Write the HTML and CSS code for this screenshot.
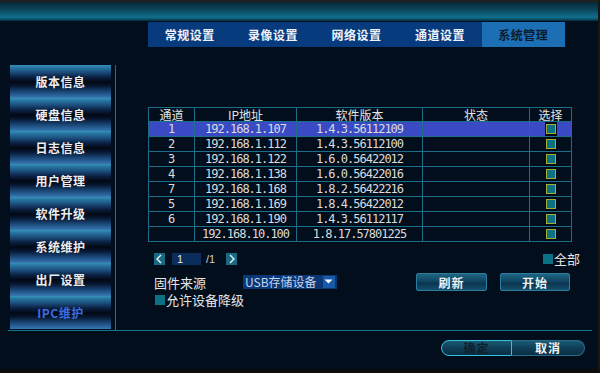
FILE: index.html
```html
<!DOCTYPE html>
<html lang="zh-CN">
<head>
    <meta charset="UTF-8">
    <title>系统管理 - IPC维护</title>
    <link rel="stylesheet" href="styles.css">
</head>
<body>
    <div class="screen">
        <div class="topbar"></div>

        <!-- 主菜单 -->
        <div class="tabs">
            <div class="tab">常规设置</div>
            <div class="tab">录像设置</div>
            <div class="tab">网络设置</div>
            <div class="tab">通道设置</div>
            <div class="tab active">系统管理</div>
        </div>

        <div class="main">
            <!-- 左侧菜单 -->
            <div class="side">
                <div class="side-btn">版本信息</div>
                <div class="side-btn">硬盘信息</div>
                <div class="side-btn">日志信息</div>
                <div class="side-btn">用户管理</div>
                <div class="side-btn">软件升级</div>
                <div class="side-btn">系统维护</div>
                <div class="side-btn">出厂设置</div>
                <div class="side-btn current">IPC维护</div>
            </div>

            <div class="content">
                <table class="ipc-table">
                    <colgroup>
                        <col class="c-ch">
                        <col class="c-ip">
                        <col class="c-ver">
                        <col class="c-st">
                        <col class="c-sel">
                    </colgroup>
                    <thead>
                        <tr>
                            <th>通道</th>
                            <th>IP地址</th>
                            <th>软件版本</th>
                            <th>状态</th>
                            <th>选择</th>
                        </tr>
                    </thead>
                    <tbody>
                        <tr class="selected">
                            <td>1</td><td class="num">192.168.1.107</td><td class="num">1.4.3.56112109</td><td></td>
                            <td class="sel"><span class="chk-wrap"><span class="chk"></span></span></td>
                        </tr>
                        <tr>
                            <td>2</td><td class="num">192.168.1.112</td><td class="num">1.4.3.56112100</td><td></td>
                            <td class="sel"><span class="chk-wrap"><span class="chk"></span></span></td>
                        </tr>
                        <tr>
                            <td>3</td><td class="num">192.168.1.122</td><td class="num">1.6.0.56422012</td><td></td>
                            <td class="sel"><span class="chk-wrap"><span class="chk"></span></span></td>
                        </tr>
                        <tr>
                            <td>4</td><td class="num">192.168.1.138</td><td class="num">1.6.0.56422016</td><td></td>
                            <td class="sel"><span class="chk-wrap"><span class="chk"></span></span></td>
                        </tr>
                        <tr>
                            <td>7</td><td class="num">192.168.1.168</td><td class="num">1.8.2.56422216</td><td></td>
                            <td class="sel"><span class="chk-wrap"><span class="chk"></span></span></td>
                        </tr>
                        <tr>
                            <td>5</td><td class="num">192.168.1.169</td><td class="num">1.8.4.56422012</td><td></td>
                            <td class="sel"><span class="chk-wrap"><span class="chk"></span></span></td>
                        </tr>
                        <tr>
                            <td>6</td><td class="num">192.168.1.190</td><td class="num">1.4.3.56112117</td><td></td>
                            <td class="sel"><span class="chk-wrap"><span class="chk"></span></span></td>
                        </tr>
                        <tr>
                            <td></td><td class="num">192.168.10.100</td><td class="num">1.8.17.57801225</td><td></td>
                            <td class="sel"><span class="chk-wrap"><span class="chk"></span></span></td>
                        </tr>
                    </tbody>
                </table>

                <div class="row-pager">
                    <div class="pager">
                        <span class="pg-btn">
                            <svg width="11" height="12" viewBox="0 0 11 12"><polyline points="7,2 3,6 7,10" fill="none" stroke="#e8f4f8" stroke-width="1.4"/></svg>
                        </span>
                        <span class="pg-input">1</span>
                        <span class="pg-total">/1</span>
                        <span class="pg-btn">
                            <svg width="11" height="12" viewBox="0 0 11 12"><polyline points="4,2 8,6 4,10" fill="none" stroke="#e8f4f8" stroke-width="1.4"/></svg>
                        </span>
                    </div>
                    <div class="check-line"><span class="box"></span>全部</div>
                </div>

                <div class="row-source">
                    <span class="label">固件来源</span>
                    <div class="select">
                        <span class="select-text">USB存储设备</span>
                        <span class="select-arrow">
                            <svg width="11" height="11" viewBox="0 0 11 11"><polygon points="1.5,3.5 9.5,3.5 5.5,7.5" fill="#ffffff"/></svg>
                        </span>
                    </div>
                    <button class="btn btn-refresh">刷新</button>
                    <button class="btn btn-start">开始</button>
                </div>

                <div class="row-allow">
                    <div class="check-line"><span class="box"></span>允许设备降级</div>
                </div>
            </div>
        </div>

        <!-- 底部按钮 -->
        <div class="footer">
            <div class="pill">
                <button class="pill-btn ok">确定</button>
                <button class="pill-btn cancel">取消</button>
            </div>
        </div>
    </div>
</body>
</html>
```

FILE: styles.css
```css
* {
    margin: 0;
    padding: 0;
    box-sizing: border-box;
}

body {
    background: #010c19;
    font-family: "Noto Sans CJK SC", "Liberation Sans", sans-serif;
    color: #e2e2e2;
}

.screen {
    width: 600px;
    height: 373px;
    background: #020e1c;
    border-right: 2px solid #161616;
    border-bottom: 4px solid #0c0c0c;
    overflow: hidden;
}

.topbar {
    height: 21px;
    border-top: 2px solid #202020;
    background: linear-gradient(to bottom, #082636 0%, #0b4a62 45%, #10708c 80%, #0a4a62 92%, #04283a 100%);
}

/* 主菜单 */
.tabs {
    display: flex;
    width: 417px;
    height: 25px;
    margin: 1px 0 0 148px;
    background: #073b7e;
}

.tab {
    flex: 1;
    display: flex;
    align-items: center;
    justify-content: center;
    font-size: 12px;
    font-weight: 700;
    letter-spacing: 0.5px;
    color: #eef2f8;
}

.tab.active {
    background: #1c6fb4;
    color: #0c1a2c;
}

.main {
    display: flex;
    width: 584px;
    height: 266px;
    margin: 18px 0 0 8px;
    border-bottom: 1px solid #16758d;
}

/* 左侧菜单 */
.side {
    width: 108px;
    padding-left: 2px;
    border-right: 1px solid #16758d;
}

.side-btn {
    width: 101px;
    height: 33px;
    display: flex;
    align-items: center;
    justify-content: center;
    font-size: 12px;
    font-weight: 700;
    letter-spacing: 0.5px;
    color: #eeeeee;
    background: linear-gradient(to bottom,
        #3594bb 0px, #2a7aa6 2px, #1c4f7d 7px, #0b2144 12px,
        #020814 17px, #071731 21px, #17406e 26px, #2c68a0 31px, #3a7cb2 33px);
}

.side-btn.current {
    color: #3b6ee0;
}

.content {
    flex: 1;
    padding: 42px 0 0 32px;
}

/* 通道列表 */
.ipc-table {
    width: 423px;
    border-collapse: collapse;
    table-layout: fixed;
}

.c-ch { width: 46px; }
.c-ip { width: 102px; }
.c-ver { width: 126px; }
.c-st { width: 107px; }
.c-sel { width: 42px; }

.ipc-table th,
.ipc-table td {
    border: 1px solid #1c6e88;
    text-align: center;
    padding: 0;
    white-space: nowrap;
}

.ipc-table th {
    height: 14px;
    font-size: 12px;
    font-weight: 400;
    line-height: 13px;
    color: #e4e4e4;
}

.ipc-table td {
    height: 15px;
    font-family: "DejaVu Sans Mono", "Liberation Mono", monospace;
    font-size: 12px;
    line-height: 13px;
    color: #dcdcdc;
}

.ipc-table td.num {
    letter-spacing: -1px;
}

.ipc-table tr.selected td {
    background: #3a4ac4;
}

.ipc-table td.sel {
    line-height: 0;
}

.chk-wrap {
    display: inline-block;
    padding: 2px 1px;
    background: #020b15;
}

.chk {
    display: block;
    width: 10px;
    height: 10px;
    background: #0d7184;
    border: 1px solid #a6ad34;
}

/* 下方工具区 */
.row-pager {
    display: flex;
    justify-content: space-between;
    align-items: center;
    width: 432px;
    height: 14px;
    margin-top: 10px;
    padding-left: 6px;
}

.pager {
    display: flex;
    align-items: center;
    font-size: 12px;
}

.pg-btn {
    display: flex;
    width: 11px;
    height: 12px;
    background: #1a6983;
}

.pg-input {
    width: 29px;
    height: 12px;
    margin-left: 7px;
    padding-left: 5px;
    background: #0a2d5c;
    font-family: "Liberation Sans", sans-serif;
    font-size: 11px;
    line-height: 12px;
    color: #e8e8e8;
}

.pg-total {
    width: 20px;
    margin-left: 5px;
    font-family: "Liberation Sans", sans-serif;
    font-size: 11px;
    color: #cfcfcf;
}

.check-line {
    display: flex;
    align-items: center;
    font-size: 13px;
    color: #e6e6e6;
    line-height: 14px;
}

.box {
    display: inline-block;
    width: 10px;
    height: 10px;
    margin-right: 1px;
    background: #0d7184;
}

.row-source {
    display: flex;
    align-items: center;
    height: 18px;
    margin-top: 7px;
    padding-left: 6px;
}

.label {
    width: 89px;
    font-size: 13px;
    color: #e6e6e6;
}

.select {
    display: flex;
    align-items: center;
    justify-content: space-between;
    width: 94px;
    height: 14px;
    padding-left: 2px;
    background: #0a3877;
}

.select-text {
    font-size: 12px;
    color: #c8d2ea;
    line-height: 14px;
}

.select-arrow {
    display: flex;
    width: 12px;
    height: 12px;
    margin-right: 2px;
    background: #1859a8;
}

.btn {
    height: 18px;
    border: 1px solid #2b7d9c;
    border-radius: 2px;
    background: linear-gradient(to bottom, #1e6684 0%, #114563 45%, #0b3550 60%, #15506e 100%);
    font-family: "Noto Sans CJK SC", sans-serif;
    font-size: 12px;
    font-weight: 700;
    letter-spacing: 1px;
    color: #f0f0f0;
}

.btn-refresh {
    width: 71px;
    margin-left: 79px;
}

.btn-start {
    width: 70px;
    margin-left: 13px;
}

.row-allow {
    margin-top: 2px;
    padding-left: 7px;
}

/* 底部按钮 */
.footer {
    display: flex;
    justify-content: flex-end;
    padding: 9px 13px 0 0;
}

.pill {
    display: flex;
    height: 16px;
}

.pill-btn {
    height: 16px;
    font-family: "Noto Sans CJK SC", sans-serif;
    font-size: 12px;
    font-weight: 700;
    letter-spacing: 1px;
    line-height: 14px;
    background: linear-gradient(to bottom, #1b5a74 0%, #0f3d56 50%, #0a2f45 100%);
}

.pill-btn.ok {
    width: 71px;
    border: 1px solid #36c0de;
    border-radius: 8px 0 0 8px;
    color: #10202a;
}

.pill-btn.cancel {
    width: 73px;
    border: 1px solid #2a6d88;
    border-left: none;
    border-radius: 0 8px 8px 0;
    color: #f2f2f2;
}
```
